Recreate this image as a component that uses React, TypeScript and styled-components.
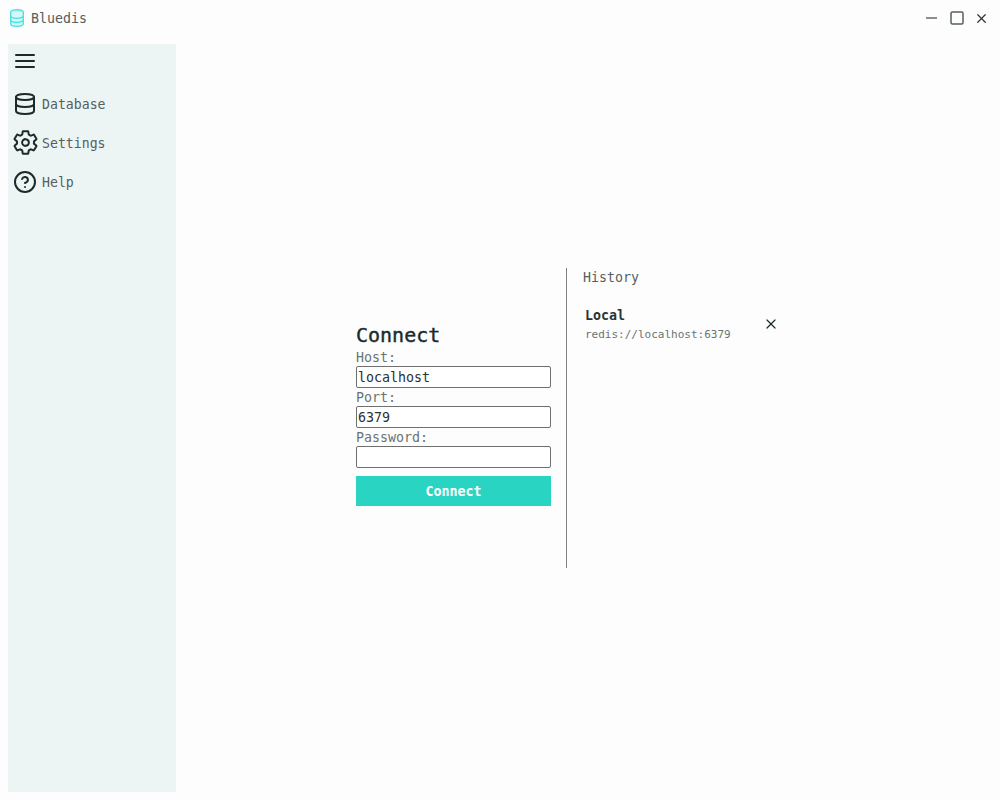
import { createGlobalStyle, styled } from 'styled-components'
import { CircleHelp, Database, X } from 'lucide-react'
import { IoSettingsOutline } from 'react-icons/io5'

const GlobalStyle = createGlobalStyle`
    html, body {
        margin: 0;
        height: 100%;
        background-color: #fdfdfd;
        font-family: 'DejaVu Sans Mono', 'Liberation Mono', monospace;
    }
`

const Window = styled.div`
    width: 1000px;
    height: 800px;
    display: flex;
    flex-direction: column;
    overflow: hidden;
`

const TitleBar = styled.header`
    height: 36px;
    display: flex;
    align-items: center;
    padding: 0 6px 0 10px;
    color: #55605f;
    font-size: 13.3px;
`

const AppName = styled.span`
    margin-left: 7px;
    flex: 1;
`

const WindowButton = styled.button`
    width: 25px;
    height: 36px;
    padding: 0;
    border: none;
    background: none;
    display: flex;
    align-items: center;
    justify-content: center;
`

const Body = styled.div`
    flex: 1;
    display: flex;
    padding: 8px 0 8px 8px;
    min-height: 0;
`

const Sidebar = styled.nav`
    width: 168px;
    background-color: #ecf5f3;
    padding-top: 5px;
    box-sizing: border-box;
`

const MenuButton = styled.div`
    height: 24px;
    display: flex;
    align-items: center;
    padding-left: 7px;
    margin-bottom: 11px;
    color: #1c2b2a;
`

const NavItem = styled.a`
    height: 39px;
    display: flex;
    align-items: center;
    color: #55605f;
    font-size: 13.2px;
`

const NavLabel = styled.span`
    padding-top: 2px;
`

const NavIcon = styled.span`
    width: 34px;
    display: flex;
    justify-content: center;
    color: #1c2b2a;
`

const GearIcon = styled(IoSettingsOutline)`
    margin-left: 1px;
    path {
        stroke-width: 38;
    }
`

const Main = styled.main`
    flex: 1;
    display: flex;
    align-items: center;
    justify-content: center;
`

const Panel = styled.div`
    width: 464px;
    height: 300px;
    display: flex;
`

const ConnectForm = styled.form`
    width: 195px;
    margin: 0 15px 8px 0;
    align-self: center;
    display: flex;
    flex-direction: column;
`

const Heading = styled.h2`
    margin: 0 0 1px;
    height: 24px;
    line-height: 24px;
    font-size: 20px;
    font-weight: 400;
    -webkit-text-stroke: 0.4px #1c2b2a;
    color: #1c2b2a;
`

const Label = styled.label`
    height: 18px;
    line-height: 20px;
    font-size: 13.3px;
    color: #6a7372;
`

const Input = styled.input`
    width: 195px;
    height: 22px;
    box-sizing: border-box;
    border: 1px solid #6f6f6f;
    border-radius: 2px;
    padding: 1px 1px 0;
    font-family: inherit;
    font-size: 13.3px;
    color: #2a3130;
    background-color: #fff;
    outline: none;
`

const ConnectButton = styled.button`
    height: 30px;
    margin-top: 8px;
    padding: 1px 0 0;
    border: none;
    background-color: #2ad4c2;
    color: #fff;
    font-family: inherit;
    font-size: 13.3px;
    font-weight: 700;
`

const History = styled.section`
    flex: 1;
    border-left: 1px solid #808080;
    padding-left: 16px;
`

const HistoryTitle = styled.div`
    height: 20px;
    line-height: 20px;
    font-size: 13.3px;
    color: #55605f;
`

const HistoryItem = styled.div`
    width: 194px;
    margin: 18px 0 0 2px;
    display: flex;
    align-items: center;
    justify-content: space-between;
`

const ItemName = styled.div`
    font-size: 13.3px;
    font-weight: 700;
    line-height: 20px;
    color: #2a3534;
`

const ItemUrl = styled.div`
    font-size: 11px;
    line-height: 18px;
    color: #6a7372;
`

const RemoveIcon = styled(X)`
    margin-bottom: 2px;
`

export default function App() {
    return (
        <Window>
            <GlobalStyle />
            <TitleBar>
                <svg width="14" height="18" viewBox="0 0 14 18" fill="none" stroke="#45dfe6" strokeWidth="1.3">
                    <ellipse cx="7" cy="3" rx="6.300" ry="2.300" fill="#b9f3ee" />
                    <path d="M.7 3v12c0 1.300 2.800 2.300 6.300 2.300s6.300-1 6.300-2.300V3" fill="#d4f8f4" />
                    <path d="M.7 7c0 1.300 2.800 2.300 6.300 2.300S13.300 8.300 13.300 7M.7 11c0 1.300 2.800 2.300 6.300 2.300s6.300-1 6.300-2.300" />
                </svg>
                <AppName>Bluedis</AppName>
                <WindowButton>
                    <svg width="12" height="12" viewBox="0 0 12 12"><path d="M0 6h11" stroke="#55605f" strokeWidth="1.4" /></svg>
                </WindowButton>
                <WindowButton>
                    <svg width="14" height="14" viewBox="0 0 14 14"><rect x="1" y="1" width="12" height="12" rx="1.5" fill="none" stroke="#55605f" strokeWidth="1.5" /></svg>
                </WindowButton>
                <WindowButton>
                    <X size={15} color="#2a3534" strokeWidth={1.9} />
                </WindowButton>
            </TitleBar>
            <Body>
                <Sidebar>
                    <MenuButton>
                        <svg width="20" height="14" viewBox="0 0 20 14" stroke="currentColor" strokeWidth="2" strokeLinecap="round">
                            <path d="M1 1h18M1 7h18M1 13h18" />
                        </svg>
                    </MenuButton>
                    <NavItem>
                        <NavIcon><Database size={24} strokeWidth={2} /></NavIcon>
                        <NavLabel>Database</NavLabel>
                    </NavItem>
                    <NavItem>
                        <NavIcon><GearIcon size={27} /></NavIcon>
                        <NavLabel>Settings</NavLabel>
                    </NavItem>
                    <NavItem>
                        <NavIcon><CircleHelp size={24} strokeWidth={2} /></NavIcon>
                        <NavLabel>Help</NavLabel>
                    </NavItem>
                </Sidebar>
                <Main>
                    <Panel>
                        <ConnectForm>
                            <Heading>Connect</Heading>
                            <Label>Host:</Label>
                            <Input defaultValue="localhost" />
                            <Label>Port:</Label>
                            <Input defaultValue="6379" />
                            <Label>Password:</Label>
                            <Input type="password" />
                            <ConnectButton type="button">Connect</ConnectButton>
                        </ConnectForm>
                        <History>
                            <HistoryTitle>History</HistoryTitle>
                            <HistoryItem>
                                <div>
                                    <ItemName>Local</ItemName>
                                    <ItemUrl>redis://localhost:6379</ItemUrl>
                                </div>
                                <RemoveIcon size={16} color="#1c2b2a" strokeWidth={1.8} />
                            </HistoryItem>
                        </History>
                    </Panel>
                </Main>
            </Body>
        </Window>
    )
}
